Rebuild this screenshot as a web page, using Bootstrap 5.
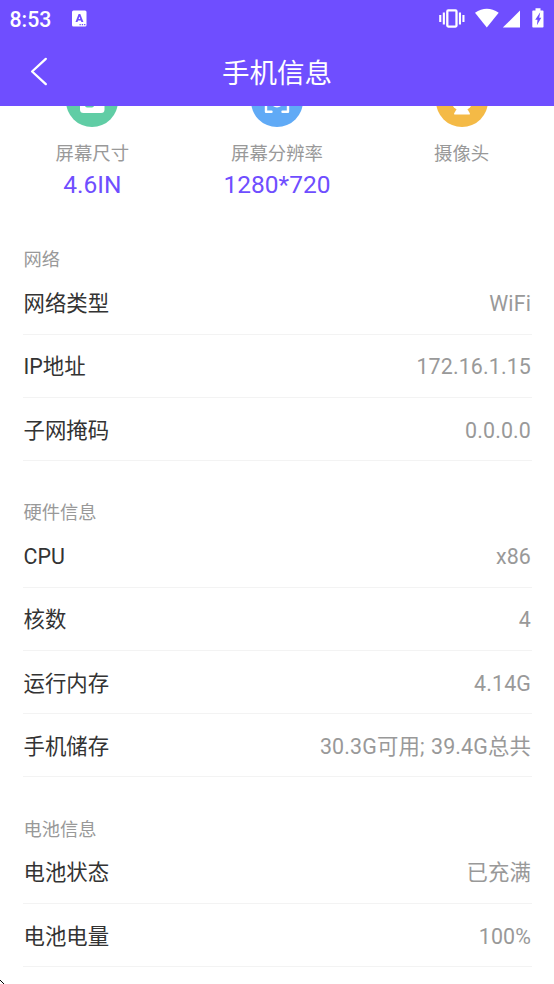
<!DOCTYPE html>
<html lang="zh-CN">

<head>
    <meta charset="UTF-8">
    <title>手机信息</title>
    <meta name="viewport" content="width=device-width, initial-scale=1">

    <!-- Bootstrap CSS -->
    <link href="https://cdn.jsdelivr.net/npm/bootstrap@5.3.3/dist/css/bootstrap.min.css" rel="stylesheet">

    <style>
        :root {
            --violet: #6f4eff;
            --ink: #333;
            --muted: #999;
            --line: #f3f3f3;
        }

        body {
            height: 984px;
            font-family: Roboto, "Noto Sans CJK SC", sans-serif;
            font-size: 21.4px;
            line-height: 1.2;
            color: var(--ink);
        }

        .top-area {
            height: 106px;
            background: var(--violet);
        }

        .status-bar {
            height: 37px;
            padding-left: 9.5px;
        }

        .clock {
            width: 52.5px;
            padding-top: 2px;
            font-size: 21.3px;
            font-weight: 500;
        }

        .title-bar {
            height: 69px;
        }

        .page-title {
            padding-top: 4px;
            font-size: 27.5px;
            font-weight: 400;
        }

        .back-link {
            left: 30px;
            top: 20px;
        }

        .page-body {
            height: 878px;
        }

        /* the list is scrolled, only the bottom of the icons shows */
        .stat-row {
            height: 133.25px;
            margin-top: -31.25px;
        }

        .stat-label {
            margin-top: 15px;
            font-size: 18.4px;
            line-height: 24px;
            color: var(--muted);
        }

        .stat-value {
            margin-top: 4.5px;
            font-size: 24.5px;
            line-height: 30px;
            color: var(--violet);
        }

        .section-title {
            height: 64.25px;
            margin-bottom: -1px;
            padding: 0 0 1px .5px;
            font-size: 18.3px;
            line-height: 22px;
            font-weight: 400;
            color: var(--muted);
        }

        .info-row {
            height: 63.25px;
            padding: 3px 1px 0 .5px;
            border-bottom: 1.5px solid var(--line);
        }

        .info-list {
            margin: 0 22px 0 23px;
        }

        .info-value {
            color: var(--muted);
            letter-spacing: .13px;
            word-spacing: 1px;
        }

        .cursor-tip {
            left: 0;
            bottom: 0;
        }
    </style>
</head>

<body class="bg-white overflow-hidden position-relative">

    <header class="top-area text-white">
        <!-- Status bar -->
        <div class="status-bar d-flex align-items-center">
            <span class="clock flex-shrink-0">8:53</span>
            <svg class="flex-shrink-0" width="482" height="37" viewBox="62 0 482 37" fill="#fff">
                <rect x="72" y="10.5" width="14.5" height="16" rx="1.5" />
                <path d="M75.5 22 78.6 14h1.7l3.1 8h-2l-.6-1.6h-2.7l-.6 1.6zM78.6 19h1.7l-.85-2.6z" fill="#6f4eff" fill-rule="evenodd" />
                <path d="M79.5 24h1.3v1.3h-1.3zM81.8 24h1.3v1.3h-1.3zM84.1 24h1.3v1.3h-1.3z" fill="#6f4eff" />
                <rect x="447.3" y="10.4" width="9.2" height="16.2" rx="1" fill="none" stroke="#fff" stroke-width="2.3" />
                <path d="M442.8 12.5h2.1v12h-2.1zM439.2 15h2.1v7h-2.1zM458.9 12.5h2.1v12h-2.1zM462.4 15h2.1v7h-2.1z" />
                <path d="M475 12.8Q486.8 4.8 498.7 12.8L486.8 27.6z" />
                <path d="M520 10.6v16.9h-17.2z" />
                <path d="M535.5 8.3h5v2.1h2.2q.8 0 .8.8v15.5q0 .8-.8.8h-9.6q-.8 0-.8-.8V11.2q0-.8.8-.8h2.4zM540.2 12.3l-5 7.4h2.3l-.6 5.6 4.4-7.6h-2.1z" fill-rule="evenodd" />
            </svg>
        </div>

        <!-- Title bar -->
        <div class="title-bar position-relative d-flex align-items-center justify-content-center">
            <a href="#" class="back-link position-absolute d-flex" aria-label="返回">
                <svg width="18" height="29" viewBox="0 0 18 29" fill="none" stroke="#fff" stroke-width="2.3" stroke-linecap="round" stroke-linejoin="round">
                    <path d="M15.8 1.9 2.1 14.5 15.8 27.1" />
                </svg>
            </a>
            <h1 class="page-title mb-0">手机信息</h1>
        </div>
    </header>

    <main class="page-body overflow-hidden">
        <div class="stat-row row g-0 text-center">
            <div class="col-4 d-flex flex-column align-items-center">
                <svg width="52" height="52" viewBox="0 0 52 52">
                    <circle cx="26" cy="26" r="26" fill="#60cda5" />
                    <rect x="14" y="14" width="24.5" height="24" rx="3.5" fill="#fff" />
                    <rect x="19" y="19" width="9" height="13.4" rx="2" fill="#60cda5" />
                </svg>
                <div class="stat-label">屏幕尺寸</div>
                <div class="stat-value">4.6IN</div>
            </div>
            <div class="col-4 d-flex flex-column align-items-center">
                <svg width="52" height="52" viewBox="0 0 52 52">
                    <circle cx="26" cy="26" r="26" fill="#60aaf6" />
                    <path d="M20.5 14.5h-5.5v6M31.5 14.5H37v6M20.5 36.7h-5.5v-6.5M31.5 36.7H37v-6.5" fill="none" stroke="#fff" stroke-width="2.4" stroke-linecap="round" stroke-linejoin="round" />
                    <circle cx="26" cy="26" r="5.3" fill="none" stroke="#fff" stroke-width="2.2" />
                </svg>
                <div class="stat-label">屏幕分辨率</div>
                <div class="stat-value">1280*720</div>
            </div>
            <div class="col-4 d-flex flex-column align-items-center">
                <svg width="52" height="52" viewBox="0 0 52 52">
                    <circle cx="26" cy="26" r="26" fill="#f4ba46" />
                    <circle cx="26" cy="24" r="11.5" fill="#fff" />
                    <path d="M21 33.5h10l2.8 4.7v1.4H18.2v-1.4z" fill="#fff" />
                </svg>
                <div class="stat-label">摄像头</div>
            </div>
        </div>

        <div class="info-list">
            <section>
                <h2 class="section-title d-flex align-items-end">网络</h2>
                <div class="info-row d-flex align-items-center justify-content-between">
                    <span>网络类型</span><span class="info-value">WiFi</span>
                </div>
                <div class="info-row d-flex align-items-center justify-content-between">
                    <span>IP地址</span><span class="info-value">172.16.1.15</span>
                </div>
                <div class="info-row d-flex align-items-center justify-content-between">
                    <span>子网掩码</span><span class="info-value">0.0.0.0</span>
                </div>
            </section>

            <section>
                <h2 class="section-title d-flex align-items-end">硬件信息</h2>
                <div class="info-row d-flex align-items-center justify-content-between">
                    <span>CPU</span><span class="info-value">x86</span>
                </div>
                <div class="info-row d-flex align-items-center justify-content-between">
                    <span>核数</span><span class="info-value">4</span>
                </div>
                <div class="info-row d-flex align-items-center justify-content-between">
                    <span>运行内存</span><span class="info-value">4.14G</span>
                </div>
                <div class="info-row d-flex align-items-center justify-content-between">
                    <span>手机储存</span><span class="info-value">30.3G可用; 39.4G总共</span>
                </div>
            </section>

            <section>
                <h2 class="section-title d-flex align-items-end">电池信息</h2>
                <div class="info-row d-flex align-items-center justify-content-between">
                    <span>电池状态</span><span class="info-value">已充满</span>
                </div>
                <div class="info-row d-flex align-items-center justify-content-between">
                    <span>电池电量</span><span class="info-value">100%</span>
                </div>
            </section>
        </div>
    </main>

    <!-- Tip of the mouse pointer -->
    <svg class="cursor-tip position-absolute" width="5" height="5" viewBox="0 0 5 5" fill="#000" shape-rendering="crispEdges">
        <path d="M0 1h1v1H0zM1 2h1v1H1zM2 3h1v1H2zM3 4h1v1H3z" />
    </svg>

    <!-- Bootstrap JS -->
    <script src="https://cdn.jsdelivr.net/npm/bootstrap@5.3.3/dist/js/bootstrap.bundle.min.js"></script>
</body>

</html>
